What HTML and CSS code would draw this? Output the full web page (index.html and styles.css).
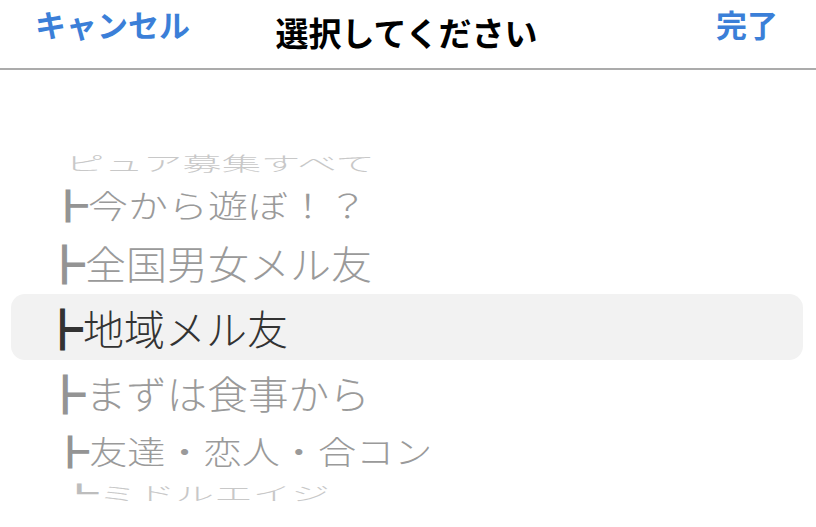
FILE: index.html
```html
<!DOCTYPE html>
<html lang="ja">
<head>
    <meta charset="utf-8">
    <meta name="viewport" content="width=device-width, initial-scale=1">
    <link rel="stylesheet" href="styles.css">
    <title>選択してください</title>
</head>
<body>
    <div class="sheet">
        <div class="bar">
            <button class="action cancel">キャンセル</button>
            <div class="title">選択してください</div>
            <button class="action done">完了</button>
        </div>
        <div class="picker">
            <div class="row r-3"><span class="label">ピュア募集すべて</span></div>
            <div class="row r-2"><span class="label"><span class="branch">┣</span>今から遊ぼ！？</span></div>
            <div class="row r-1"><span class="label"><span class="branch">┣</span>全国男女メル友</span></div>
            <div class="row r0"><span class="label"><span class="branch">┣</span>地域メル友</span></div>
            <div class="row r1"><span class="label"><span class="branch">┣</span>まずは食事から</span></div>
            <div class="row r2"><span class="label"><span class="branch">┣</span>友達・恋人・合コン</span></div>
            <div class="row r3"><span class="label"><span class="branch">┗</span>ミドルエイジ</span></div>
        </div>
    </div>
</body>
</html>
```

FILE: styles.css
```css
* { margin: 0; padding: 0; box-sizing: border-box; }
html, body { width: 100%; height: 100%; background: #fff; overflow: hidden; }
body { font-family: "Noto Sans CJK JP", "Noto Sans", sans-serif; color: #000; }

.bar { height: 70px; display: grid; grid-template-columns: 1fr auto 1fr; align-items: center; border-bottom: 2px solid #ababab; padding: 0 38px 4px 35px; }
.action { background: none; border: none; font-family: inherit; font-size: 31px; font-weight: 700; color: #3b7fd8; line-height: 1; margin-bottom: 18px; cursor: pointer; }
.cancel { justify-self: start; }
.done { justify-self: end; }
.title { font-size: 33px; font-weight: 700; line-height: 1; }

.picker { padding-top: 76px; display: flex; flex-direction: column; }
.row { display: flex; align-items: center; font-size: 41px; font-weight: 300; line-height: 1; color: #9a9a9a; white-space: nowrap; }
.label { display: inline-block; transform-origin: left center; }
.branch { color: #949494; font-weight: 400; }

.r-3 { height: 32px; padding-left: 65px; color: #c8c8c8; }
.r-3 .label { transform: scale(0.96, 0.48); }
.r-2 { height: 52px; padding-left: 48px; }
.r-2 .label { transform: scale(0.975, 0.78); }
.r-1 { height: 64px; padding-left: 44px; }
.r-1 .label { transform: scale(1, 0.94); }
.r0 { height: 66px; margin: 0 13px 0 11px; padding-left: 31px; background: #f2f2f2; border-radius: 14px; color: #333; }
.r0 .branch { color: #333; }
.r1 { height: 64px; padding-left: 45px; }
.r1 .label { transform: scale(0.99, 0.94); }
.r2 { height: 52px; padding-left: 51px; }
.r2 .label { transform: scale(0.93, 0.78); }
.r3 { height: 32px; padding-left: 60px; color: #c8c8c8; }
.r3 .label { transform: scale(0.94, 0.46); }
.r3 .branch { color: #bdbdbd; }
```
